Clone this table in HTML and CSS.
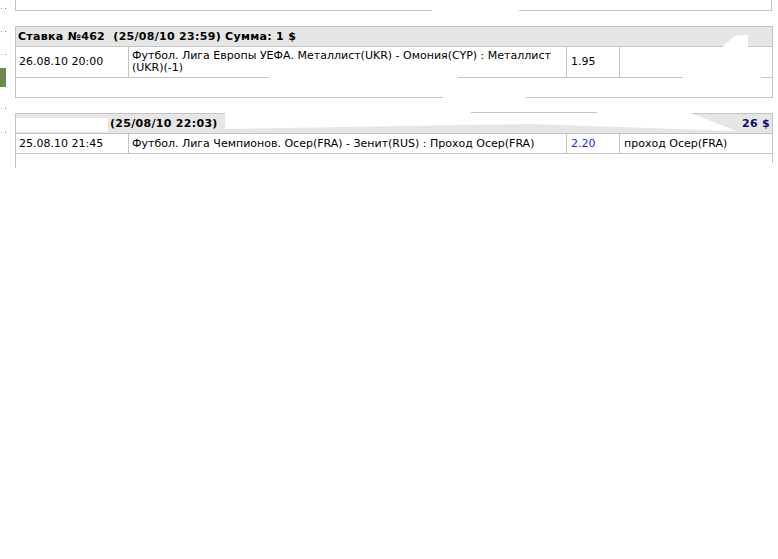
FILE: index.html
```html
<!DOCTYPE html>
<html lang="ru">
<head>
    <meta charset="UTF-8">
    <title>Ставки</title>
    <link rel="stylesheet" href="styles.css">
</head>
<body>
    <div class="page">
        <div class="side">
            <span class="dot d1"></span>
            <span class="dot d2"></span>
            <span class="dot d3"></span>
            <span class="side-block"></span>
            <span class="dot d4"></span>
            <span class="dot d5"></span>
        </div>

        <div class="bets">
            <div class="bet-tail"></div>

            <table class="bet">
                <colgroup>
                    <col class="c-date"><col class="c-desc"><col class="c-odds"><col class="c-res">
                </colgroup>
                <tr class="bet-head">
                    <td colspan="4">Ставка №462&nbsp; (25/08/10 23:59) Сумма: 1 $</td>
                </tr>
                <tr class="bet-row">
                    <td class="date">26.08.10 20:00</td>
                    <td class="desc">Футбол. Лига Европы УЕФА. Металлист(UKR) - Омония(CYP) : Металлист (UKR)(-1)</td>
                    <td class="odds">1.95</td>
                    <td class="res"></td>
                </tr>
                <tr class="bet-empty"><td colspan="4"></td></tr>
            </table>

            <table class="bet bet-last">
                <colgroup>
                    <col class="c-date"><col class="c-desc"><col class="c-odds"><col class="c-res">
                </colgroup>
                <tr class="bet-head">
                    <td colspan="4">
                        <div class="head-line">
                            <span class="head-info">(25/08/10 22:03)</span>
                            <span class="head-sum">26 $</span>
                        </div>
                    </td>
                </tr>
                <tr class="bet-row">
                    <td class="date">25.08.10 21:45</td>
                    <td class="desc">Футбол. Лига Чемпионов. Осер(FRA) - Зенит(RUS) : Проход Осер(FRA)</td>
                    <td class="odds win">2.20</td>
                    <td class="res">проход Осер(FRA)</td>
                </tr>
                <tr class="bet-empty"><td colspan="4"></td></tr>
            </table>
        </div>
    </div>

    <!-- затертые места на скриншоте -->
    <svg class="smudges" width="778" height="559" viewBox="0 0 778 559">
        <rect x="432" y="9" width="87" height="3" fill="#fff"/>
        <polygon points="722,47 729,41 734,36 748,35 748,47" fill="#fff"/>
        <rect x="269" y="76" width="189" height="3" fill="#fff"/>
        <rect x="683" y="70" width="78" height="9" fill="#fff"/>
        <rect x="443" y="96" width="83" height="3" fill="#fff"/>
        <polygon points="16,118 108,118 108,132 16,132" fill="#fff"/>
        <polygon points="225,111 686,111 736,131 531,124 225,129" fill="#fff"/>
        <rect x="471" y="112" width="126" height="1" fill="#c4c4c4"/>
        <rect x="762" y="163" width="12" height="10" fill="#fff"/>
        <rect x="0" y="168" width="778" height="391" fill="#fff"/>
    </svg>
</body>
</html>
```

FILE: styles.css
```css
* {
    margin: 0;
    padding: 0;
    box-sizing: border-box;
}

body {
    font-family: 'DejaVu Sans', Verdana, sans-serif;
    font-size: 11px;
    color: #000;
    background: #fff;
}

.page {
    display: flex;
    align-items: flex-start;
}

.side {
    width: 15px;
    flex-shrink: 0;
    display: flex;
    flex-direction: column;
}

.dot {
    display: block;
    width: 5px;
    height: 1px;
    margin-left: 1px;
    border-left: 1px solid #9a9a9a;
    border-right: 1px solid #9a9a9a;
}

.d1 { margin-top: 8px; }
.d2 { margin-top: 22px; }
.d3 { margin-top: 22px; }
.d4 { margin-top: 21px; }
.d5 { margin-top: 23px; }

.side-block {
    display: block;
    width: 6px;
    height: 19px;
    margin-top: 13px;
    background: #6e8b4e;
}

.bets {
    width: 757px;
}

.bet-tail {
    height: 11px;
    border: 1px solid #c4c4c4;
    border-top: none;
    margin-bottom: 15px;
}

.bet {
    width: 757px;
    table-layout: fixed;
    border-collapse: collapse;
    margin-bottom: 15px;
}

.c-date { width: 113px; }
.c-desc { width: 438px; }
.c-odds { width: 53px; }
.c-res { width: 153px; }

.bet td {
    border: 1px solid #c4c4c4;
    padding: 3px 3px;
    line-height: 12px;
    vertical-align: middle;
}

.bet-head td {
    background: #e6e6e6;
    font-weight: bold;
    letter-spacing: 0.3px;
    height: 20px;
    padding: 3px 2px;
}

.head-line {
    display: flex;
    justify-content: space-between;
}

.head-info {
    padding-left: 92px;
}

.head-sum {
    color: #0b0b70;
}

.bet-row td {
    height: 20px;
}

.bet .desc {
    padding-left: 3px;
}

.bet .odds {
    padding-left: 4px;
}

.bet .win {
    color: #1e1ef0;
}

.bet .res {
    padding-left: 4px;
}

.bet-empty td {
    height: 20px;
}

.bet-last .bet-empty td {
    border-bottom: none;
}

.smudges {
    position: absolute;
    left: 0;
    top: 0;
    pointer-events: none;
}
```
